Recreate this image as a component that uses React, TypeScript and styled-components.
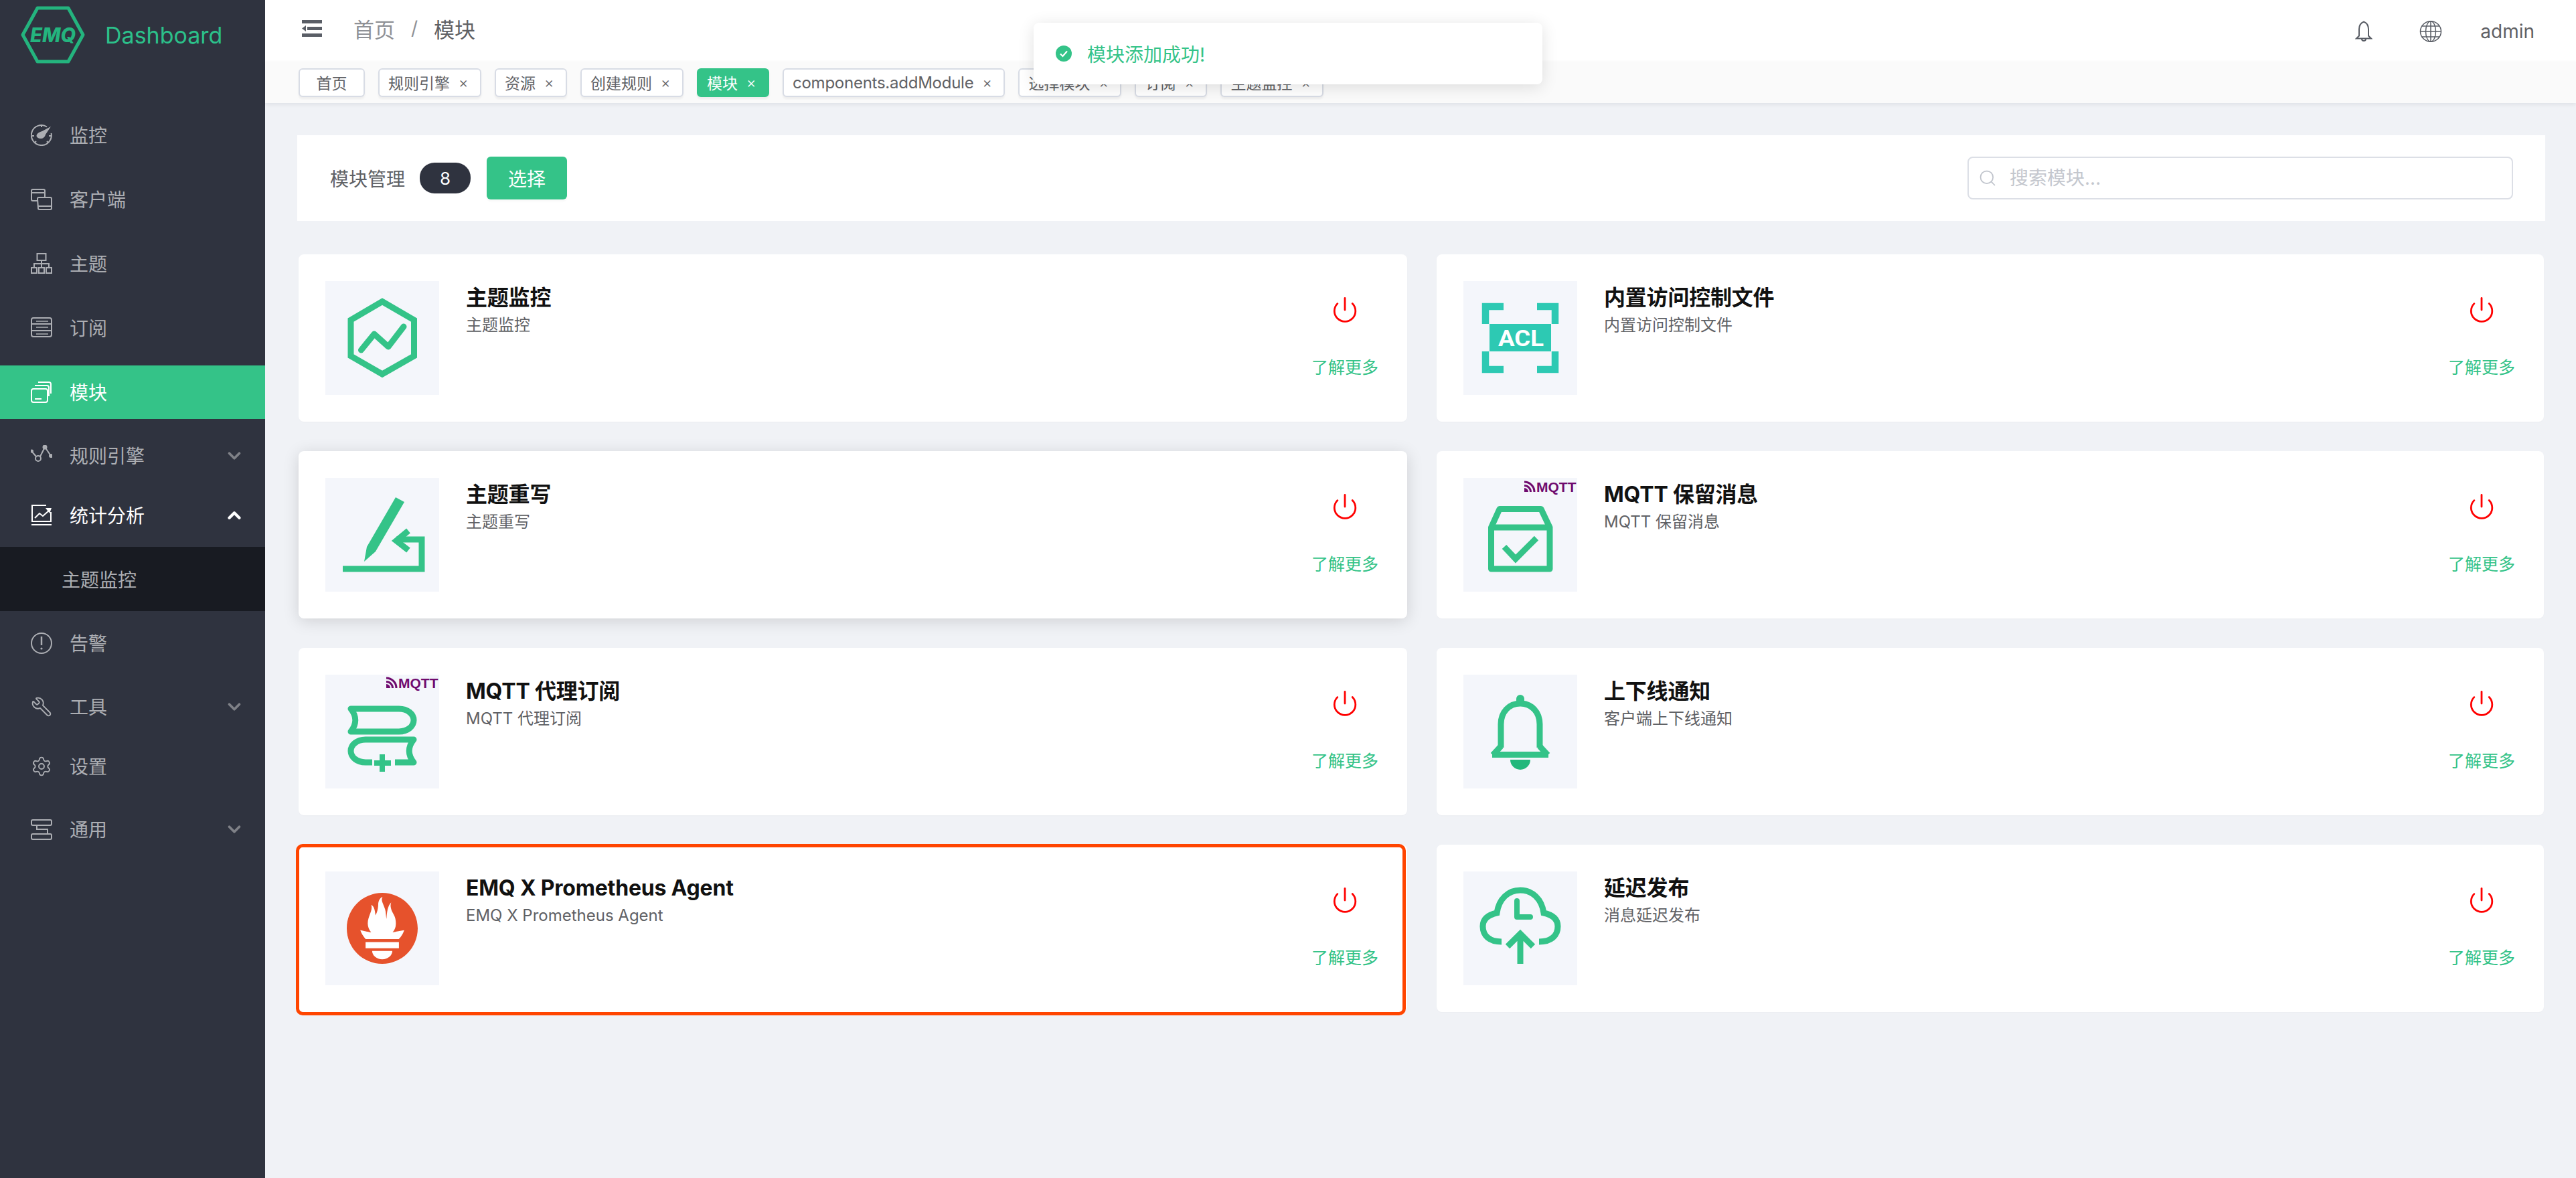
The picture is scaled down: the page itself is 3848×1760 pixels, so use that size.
import React from 'react';
import styled, {createGlobalStyle} from "styled-components";
import {ChevronDown, ChevronUp, Settings, Wrench, Power, Search} from "lucide-react";
import {SiPrometheus} from "react-icons/si";

const FONT = `Inter, "Noto Sans CJK SC", sans-serif`;
const GREEN = "#34c388";

const GlobalStyle = createGlobalStyle`
  html, body {
    margin: 0;
    padding: 0;
    background: #f0f2f6;
    font-family: ${FONT};
  }
  * {
    box-sizing: border-box;
  }
`

/* ---------- sidebar icons ---------- */

const NavSvg: React.FC<{children: React.ReactNode}> = ({children}) => (
    <svg width={32} height={32} viewBox="0 0 32 32" fill="none" stroke="currentColor" strokeWidth={2}>
        {children}
    </svg>
);

const GaugeIcon = () => (
    <NavSvg>
        <path d="M24 3.500A15 15 0 1 0 30.500 13"/>
        <path d="M16 1v3M2 17h3M27 17h3M6 27l2-2M26 27l-2-2"/>
        <path d="M9 15c2-3 5-4 8-5l13-7-8 12c-1 4-4 6-7 6s-8-2-6-6z" fill="currentColor" stroke="none"/>
    </NavSvg>
);
const ClientIcon = () => (
    <NavSvg>
        <path d="M10 18H3a2 2 0 0 1-2-2V3a2 2 0 0 1 2-2h16a2 2 0 0 1 2 2v10"/>
        <path d="M1 6h20"/>
        <path d="M10 15a2 2 0 0 1 2-2h17a2 2 0 0 1 2 2v14a2 2 0 0 1-2 2H13a2 2 0 0 1-2-2z"/>
        <path d="M11 26h20"/>
    </NavSvg>
);
const TopicIcon = () => (
    <NavSvg>
        <rect x="9.500" y="1" width="13" height="10"/>
        <path d="M16 11v10M5 21v-5h22v5"/>
        <rect x="1" y="22" width="8" height="8"/>
        <rect x="12" y="22" width="8" height="8"/>
        <rect x="23" y="22" width="8" height="8"/>
    </NavSvg>
);
const SubIcon = () => (
    <NavSvg>
        <rect x="1" y="1" width="30" height="28" rx="3"/>
        <path d="M1 10h30M1 20h30"/>
        <path d="M8 6h18M8 15h18M8 25h18" strokeWidth={1.5}/>
    </NavSvg>
);
const ModuleIcon = () => (
    <NavSvg>
        <rect x="1" y="11" width="24" height="20" rx="3"/>
        <path d="M6 6h18a3 3 0 0 1 3 3v13"/>
        <path d="M11 1h16a3 3 0 0 1 3 3v14"/>
        <path d="M6 26h10"/>
    </NavSvg>
);
const RuleIcon = () => (
    <NavSvg>
        <path d="M1 9l7 8M14 17l7-14 9 13"/>
        <circle cx="11" cy="20" r="4"/>
        <circle cx="1.500" cy="9" r="2.500" fill="currentColor" stroke="none"/>
        <circle cx="21" cy="3" r="3.500" fill="currentColor" stroke="none"/>
        <circle cx="30" cy="16" r="3" fill="currentColor" stroke="none"/>
    </NavSvg>
);
const StatsIcon = () => (
    <NavSvg>
        <path d="M30 11v14H2V1h21"/>
        <path d="M6 20l7-7 5 4 9-8"/>
        <path d="M22 5h9l-3 8z" fill="currentColor" stroke="none"/>
        <path d="M1 30h30"/>
    </NavSvg>
);
const AlertIcon = () => (
    <NavSvg>
        <circle cx="16" cy="16" r="15"/>
        <path d="M16 6v13" strokeWidth={2.5}/>
        <circle cx="16" cy="24" r="1.600" fill="currentColor" stroke="none"/>
    </NavSvg>
);
const GeneralIcon = () => (
    <NavSvg>
        <rect x="1" y="2" width="30" height="8" rx="2"/>
        <rect x="1" y="23" width="30" height="8" rx="2"/>
        <path d="M9 10v6h16v7"/>
    </NavSvg>
);
const FlippedWrench = styled(Wrench)`
  transform: scaleX(-1);
`

/* ---------- header icons ---------- */

const HamburgerIcon = () => (
    <svg width={30} height={25} viewBox="0 0 30 25" fill="#5a5e66">
        <rect width="30" height="5"/>
        <rect x="8" y="10" width="22" height="5"/>
        <rect y="20" width="30" height="5"/>
        <path d="M0 12.500L6 8v9z"/>
    </svg>
);
const BellIcon = () => (
    <svg width={26} height={32} viewBox="0 0 26 32" fill="none" stroke="#5a5e66" strokeWidth={2}>
        <path d="M13 1.500c-5 2-7 6-7 11v10l-4 4h22l-4-4v-10c0-5-2-9-7-11z"/>
        <path d="M10 27a3 3 0 0 0 6 0"/>
    </svg>
);
const GlobeIcon = () => (
    <svg width={34} height={32} viewBox="0 0 34 32" fill="none" stroke="#5a5e66" strokeWidth={1.5}>
        <ellipse cx="17" cy="16" rx="15.500" ry="15.200"/>
        <ellipse cx="17" cy="16" rx="7.500" ry="15.200"/>
        <path d="M17 1v30M1.500 16h31M3.500 8h27M3.500 24h27"/>
    </svg>
);

/* ---------- module artwork, drawn on the 170 x 170 tile ---------- */

const ModuleSvg: React.FC<{children: React.ReactNode}> = ({children}) => (
    <svg width={170} height={170} viewBox="0 0 170 170" fill="none" stroke={GREEN} strokeWidth={9}>
        {children}
    </svg>
);

const MqttMark: React.FC<{top: number}> = ({top}) => (
    <g transform={`translate(0 ${top})`}>
        <g stroke="#6f0a6e" strokeWidth={3} fill="none">
            <path d="M91 6a15 15 0 0 1 15 15"/>
            <path d="M91 11.500a9.500 9.500 0 0 1 9.500 9.500"/>
        </g>
        <path d="M91 15a6 6 0 0 1 6 6h-6z" fill="#6f0a6e" stroke="none"/>
        <text x="109" y="21" fill="#6f0a6e" stroke="none" fontSize="21" fontWeight="700"
              fontFamily='"Liberation Sans", sans-serif'>MQTT</text>
    </g>
);

const TopicMetricsArt = () => (
    <ModuleSvg>
        <path d="M85 30.500L132.500 58v54L85 139l-47-27V58z"/>
        <path d="M53.500 103L73 79l21 19 23-30" strokeLinecap="round" strokeLinejoin="round"/>
    </ModuleSvg>
);
const TopicRewriteArt = () => (
    <ModuleSvg>
        <path d="M105 29l13 7-43 74-17 15 4-22z" fill={GREEN} stroke="none"/>
        <path d="M26 136h118V92h-38"/>
        <path d="M124 79l-18 15 18 14"/>
    </ModuleSvg>
);
const ProxySubArt = () => (
    <ModuleSvg>
        <MqttMark top={-1}/>
        <path d="M38 51h72c13 0 22 8 22 17s-9 17-22 17H38c9-11 9-23 0-34z" strokeLinejoin="round"/>
        <path d="M70 131H60c-13 0-22-8-22-17s9-17 22-17h72c-9 11-9 23 0 34h-28" strokeLinejoin="round"/>
        <path d="M85 119v26M73 132h25" strokeWidth={8}/>
    </ModuleSvg>
);
const AclArt = () => (
    <ModuleSvg>
        <g stroke="#2dc9b3" strokeWidth={10.5}>
            <path d="M60 38H33v26M110 38h27v26M60 132H33v-27M110 132h27v-27"/>
        </g>
        <rect x="39" y="64" width="92" height="41" fill="#2dc9b3" stroke="none"/>
        <text x="86" y="97" textAnchor="middle" fill="#fff" stroke="none" fontSize="34" fontWeight="700"
              fontFamily="Roboto, sans-serif" textLength="68" lengthAdjust="spacingAndGlyphs">ACL</text>
    </ModuleSvg>
);
const RetainerArt = () => (
    <ModuleSvg>
        <MqttMark top={0}/>
        <path d="M41.500 74L54 46.500h62L129 74v62H41.500z" strokeLinejoin="round"/>
        <path d="M41.500 74H129"/>
        <path d="M61 103l17 18 31-31"/>
    </ModuleSvg>
);
const NotifyArt = () => (
    <ModuleSvg>
        <path d="M56 109V74c0-18 12-31 29-31s29 13 29 31v35" strokeLinejoin="round"/>
        <path d="M43 119.500h84M56 107l-12 13M114 107l12 13"/>
        <path d="M79 40V36a6 6 0 0 1 12 0v4z" fill={GREEN} stroke="none"/>
        <path d="M70 127h30a15 15 0 0 1-30 0z" fill="#22b87c" stroke="none"/>
    </ModuleSvg>
);
const PrometheusArt = () => (
    <PrometheusDisc>
        <SiPrometheus size={106} color="#e6522c"/>
    </PrometheusDisc>
);
const DelayArt = () => (
    <ModuleSvg>
        <path d="M57 105c-18 0-28-9-28-23 0-10 7-17 21-20 3-21 17-34 35-34s32 13 35 34c14 3 21 10 21 20 0 14-10 23-28 23"/>
        <path d="M80 44v24h20" strokeWidth={8} strokeLinejoin="round" strokeLinecap="round"/>
        <path d="M85 138V96M66 112l19-19 19 19"/>
    </ModuleSvg>
);

/* ---------- data ---------- */

const NAV = [
    {label: "监控", icon: <GaugeIcon/>, h: 96},
    {label: "客户端", icon: <ClientIcon/>, h: 96},
    {label: "主题", icon: <TopicIcon/>, h: 96},
    {label: "订阅", icon: <SubIcon/>, h: 96},
    {label: "模块", icon: <ModuleIcon/>, h: 96, active: true},
    {label: "规则引擎", icon: <RuleIcon/>, h: 94, arrow: "down"},
    {label: "统计分析", icon: <StatsIcon/>, h: 84, arrow: "up", open: true},
    {label: "告警", icon: <AlertIcon/>, h: 96},
    {label: "工具", icon: <FlippedWrench size={34} strokeWidth={1.4}/>, h: 94, arrow: "down"},
    {label: "设置", icon: <Settings size={34} strokeWidth={1.4}/>, h: 84},
    {label: "通用", icon: <GeneralIcon/>, h: 104, arrow: "down"},
];

const TAGS = [
    {label: "首页", plain: true},
    {label: "规则引擎"},
    {label: "资源"},
    {label: "创建规则"},
    {label: "模块", active: true},
    {label: "components.addModule", latin: true},
    {label: "选择模块"},
    {label: "订阅"},
    {label: "主题监控"},
];

const MODULES = [
    {title: "主题监控", desc: "主题监控", art: <TopicMetricsArt/>},
    {title: "内置访问控制文件", desc: "内置访问控制文件", art: <AclArt/>},
    {title: "主题重写", desc: "主题重写", art: <TopicRewriteArt/>, raised: true},
    {title: "MQTT 保留消息", desc: "MQTT 保留消息", art: <RetainerArt/>},
    {title: "MQTT 代理订阅", desc: "MQTT 代理订阅", art: <ProxySubArt/>},
    {title: "上下线通知", desc: "客户端上下线通知", art: <NotifyArt/>},
    {title: "EMQ X Prometheus Agent", desc: "EMQ X Prometheus Agent", art: <PrometheusArt/>, marked: true},
    {title: "延迟发布", desc: "消息延迟发布", art: <DelayArt/>},
];

export default function App() {
    return (
        <Page>
            <GlobalStyle/>
            <Sidebar>
                <LogoRow>
                    <svg width={96} height={90} viewBox="0 0 96 90" fill="none">
                        <path d="M3 45L25 5h46l22 40-22 40H25z" stroke="#24b47e" strokeWidth={5} strokeLinejoin="round"/>
                        <text x="48" y="56" textAnchor="middle" fill="#24b47e" fontSize="30" fontWeight="800"
                              fontStyle="italic" fontFamily="Inter, sans-serif" textLength="68"
                              lengthAdjust="spacingAndGlyphs">EMQ</text>
                    </svg>
                    <LogoText>Dashboard</LogoText>
                </LogoRow>
                <Nav>
                    {NAV.map(item => (
                        <React.Fragment key={item.label}>
                            <NavRow $h={item.h}>
                                <NavItem $active={item.active} $open={item.open}>
                                    <NavIcon>{item.icon}</NavIcon>
                                    <NavLabel>{item.label}</NavLabel>
                                    {item.arrow === "down" && <ArrowDown size={30} strokeWidth={3}/>}
                                    {item.arrow === "up" && <ArrowUp size={30} strokeWidth={3.5}/>}
                                </NavItem>
                            </NavRow>
                            {item.open && <SubMenu>主题监控</SubMenu>}
                        </React.Fragment>
                    ))}
                </Nav>
            </Sidebar>

            <Main>
                <Header>
                    <HamburgerIcon/>
                    <Breadcrumb>
                        <CrumbLink>首页</CrumbLink>
                        <CrumbSep>/</CrumbSep>
                        <CrumbCurrent>模块</CrumbCurrent>
                    </Breadcrumb>
                    <HeaderRight>
                        <BellIcon/>
                        <GlobeIcon/>
                        <UserName>admin</UserName>
                    </HeaderRight>
                </Header>

                <TagBar>
                    {TAGS.map(tag => (
                        <Tag key={tag.label} $active={tag.active} $plain={tag.plain} $latin={tag.latin}>
                            {tag.label}
                            {!tag.plain && <TagClose>×</TagClose>}
                        </Tag>
                    ))}
                </TagBar>

                <Toast>
                    <svg width={24} height={24} viewBox="0 0 24 24">
                        <circle cx="12" cy="12" r="12" fill={GREEN}/>
                        <path d="M7 12.500l3.500 3.500 6.500-7.500" fill="none" stroke="#fff" strokeWidth={2.2}/>
                    </svg>
                    <ToastText>模块添加成功!</ToastText>
                </Toast>

                <Content>
                    <Toolbar>
                        <ToolbarTitle>模块管理</ToolbarTitle>
                        <CountBadge>8</CountBadge>
                        <PrimaryButton>选择</PrimaryButton>
                        <SearchBox>
                            <Search size={28} strokeWidth={1.5} color="#c0c4cc"/>
                            <SearchInput placeholder="搜索模块..."/>
                        </SearchBox>
                    </Toolbar>

                    <ModuleGrid>
                        {MODULES.map(mod => (
                            <ModuleCard key={mod.title} $raised={mod.raised} $marked={mod.marked}>
                                <ModuleTile>{mod.art}</ModuleTile>
                                <ModuleBody>
                                    <ModuleTitle>{mod.title}</ModuleTitle>
                                    <ModuleDesc>{mod.desc}</ModuleDesc>
                                </ModuleBody>
                                <ModuleActions>
                                    <Power size={42} strokeWidth={1.6} color="#ff0000"/>
                                    <MoreLink>了解更多</MoreLink>
                                </ModuleActions>
                            </ModuleCard>
                        ))}
                    </ModuleGrid>
                </Content>
            </Main>
        </Page>
    );
}

const Page = styled.div`
  display: flex;
  width: 3848px;
  height: 1760px;
  overflow: hidden;
  background: #f0f2f6;
`

const Sidebar = styled.aside`
  flex: 0 0 396px;
  background: #2f333f;
`

const LogoRow = styled.div`
  display: flex;
  align-items: center;
  height: 106px;
  padding: 0 0 2px 31px;
  gap: 30px;
`

const LogoText = styled.span`
  color: #2cc08a;
  font-size: 34px;
  font-weight: 400;
`

const Nav = styled.nav`
  margin-top: 48px;
`

const NavRow = styled.div<{$h: number}>`
  display: flex;
  align-items: center;
  height: ${p => p.$h}px;
`

const NavItem = styled.div<{$active?: boolean; $open?: boolean}>`
  display: flex;
  align-items: center;
  width: 100%;
  height: 80px;
  padding: 0 31px 0 46px;
  background: ${p => p.$active ? GREEN : "transparent"};
  color: ${p => p.$active || p.$open ? "#fff" : "#acaeb3"};
  font-size: 28px;
`

const NavIcon = styled.span`
  display: flex;
  align-items: center;
  justify-content: center;
  width: 32px;
  height: 32px;
  margin-right: 26px;
  flex: none;
`

const NavLabel = styled.span`
  flex: 1;
  padding-bottom: 2px;
`

const ArrowDown = styled(ChevronDown)`
  color: #7f8187;
`

const ArrowUp = styled(ChevronUp)`
  color: #fff;
`

const SubMenu = styled.div`
  display: flex;
  align-items: center;
  height: 96px;
  margin-top: 5px;
  padding-left: 92px;
  background: #181b22;
  color: #acaeb3;
  font-size: 28px;
`

const Main = styled.main`
  position: relative;
  flex: 1;
  min-width: 0;
  display: flex;
  flex-direction: column;
`

const Header = styled.header`
  display: flex;
  align-items: center;
  height: 92px;
  padding: 0 62px 8px 55px;
  background: #fff;
`

const Breadcrumb = styled.div`
  display: flex;
  align-items: center;
  margin-left: 47px;
  font-size: 31px;
`

const CrumbLink = styled.span`
  color: #8f9196;
`

const CrumbSep = styled.span`
  margin: 0 24px;
  color: #8f9196;
  font-size: 28px;
`

const CrumbCurrent = styled.span`
  color: #5f6165;
`

const HeaderRight = styled.div`
  display: flex;
  align-items: center;
  margin: 9px 0 0 auto;
  gap: 70px;
`

const UserName = styled.span`
  margin-left: -13px;
  color: #5f6165;
  font-size: 28px;
`

const TagBar = styled.div`
  display: flex;
  align-items: center;
  gap: 20px;
  height: 62px;
  padding-left: 50px;
  background: #fafafa;
  box-shadow: 0 2px 6px rgba(0, 21, 41, 0.08);
`

const Tag = styled.span<{$active?: boolean; $plain?: boolean; $latin?: boolean}>`
  display: flex;
  align-items: center;
  height: 43px;
  padding: ${p => p.$plain ? "0 24.5px" : "0 20px 0 13px"};
  border: 2px solid ${p => p.$active ? GREEN : "#d8dce5"};
  border-radius: 6px;
  background: ${p => p.$active ? GREEN : "#fff"};
  box-shadow: 0 3px 3px rgba(0, 0, 0, 0.05);
  color: ${p => p.$active ? "#fff" : "#5f6165"};
  font-size: ${p => p.$latin ? 24 : 23}px;
  letter-spacing: ${p => p.$latin ? "-0.25px" : "0"};
`

const TagClose = styled.span`
  margin-left: 13px;
  width: 12px;
  text-align: center;
  font-size: 22px;
  font-weight: 300;
`

const Toast = styled.div`
  position: absolute;
  left: 1148px;
  top: 34px;
  z-index: 2;
  display: flex;
  align-items: center;
  width: 760px;
  height: 92px;
  padding-left: 33px;
  border-radius: 8px;
  background: #fff;
  box-shadow: 0 4px 24px rgba(0, 0, 0, 0.12);
`

const ToastText = styled.span`
  margin-left: 23px;
  color: ${GREEN};
  font-size: 28px;
`

const Content = styled.div`
  flex: 1;
  padding: 48px 46px 0 48px;
`

const Toolbar = styled.div`
  display: flex;
  align-items: center;
  height: 128px;
  padding: 0 48px 0 49px;
  background: #fff;
`

const ToolbarTitle = styled.span`
  color: #5f6165;
  font-size: 28px;
`

const CountBadge = styled.span`
  display: flex;
  align-items: center;
  justify-content: center;
  width: 76px;
  height: 46px;
  margin-left: 22px;
  border-radius: 22px;
  background: #2f333f;
  color: #fff;
  font-size: 26px;
`

const PrimaryButton = styled.button`
  width: 120px;
  height: 64px;
  margin-left: 24px;
  border: 0;
  border-radius: 6px;
  background: ${GREEN};
  box-shadow: 0 3px 3px rgba(0, 0, 0, 0.03);
  color: #fff;
  font-family: ${FONT};
  font-size: 28px;
`

const SearchBox = styled.div`
  display: flex;
  align-items: center;
  width: 815px;
  height: 64px;
  margin-left: auto;
  padding-left: 14px;
  border: 2px solid #dcdfe6;
  border-radius: 8px;
  background: #fff;
`

const SearchInput = styled.input`
  flex: 1;
  min-width: 0;
  margin-left: 17px;
  border: 0;
  outline: 0;
  background: transparent;
  font-family: ${FONT};
  font-size: 28px;

  &::placeholder {
    color: #c4c7ce;
    opacity: 1;
  }
`

const ModuleGrid = styled.div`
  display: grid;
  grid-template-columns: 1656px 1654px;
  grid-auto-rows: 250px;
  gap: 44px;
  margin: 50px 2px 0 2px;
`

const ModuleCard = styled.div<{$raised?: boolean; $marked?: boolean}>`
  position: relative;
  display: flex;
  padding: 40px 43px 40px 40px;
  border-radius: 8px;
  background: #fff;
  box-shadow: ${p => p.$raised ? "0 4px 24px rgba(0, 0, 0, 0.14)" : "0 1px 2px rgba(0, 0, 0, 0.02)"};

  ${p => p.$marked && `
    &::after {
      content: "";
      position: absolute;
      inset: -1px 2px -5px -4px;
      border: 5px solid #ff4500;
      border-radius: 10px;
    }
  `}
`

const ModuleTile = styled.div`
  display: flex;
  align-items: center;
  justify-content: center;
  flex: 0 0 170px;
  width: 170px;
  height: 170px;
  overflow: hidden;
  background: #f4f6fb;
`

const PrometheusDisc = styled.span`
  display: flex;
  border-radius: 50%;
  background: #fff;
`

const ModuleBody = styled.div`
  flex: 1;
  min-width: 0;
  margin-left: 40px;
  padding-top: 5px;
`

const ModuleTitle = styled.div`
  color: #111;
  font-size: 32px;
  font-weight: 700;
  line-height: 40px;
  letter-spacing: -0.2px;
`

const ModuleDesc = styled.div`
  margin-top: 5px;
  color: #5f6165;
  font-size: 24px;
  line-height: 32px;
`

const ModuleActions = styled.div`
  display: flex;
  flex-direction: column;
  align-items: center;
  width: 100px;
  padding-top: 22px;
`

const MoreLink = styled.span`
  margin-top: 50px;
  color: ${GREEN};
  font-size: 25px;
  line-height: 30px;
  white-space: nowrap;
`
